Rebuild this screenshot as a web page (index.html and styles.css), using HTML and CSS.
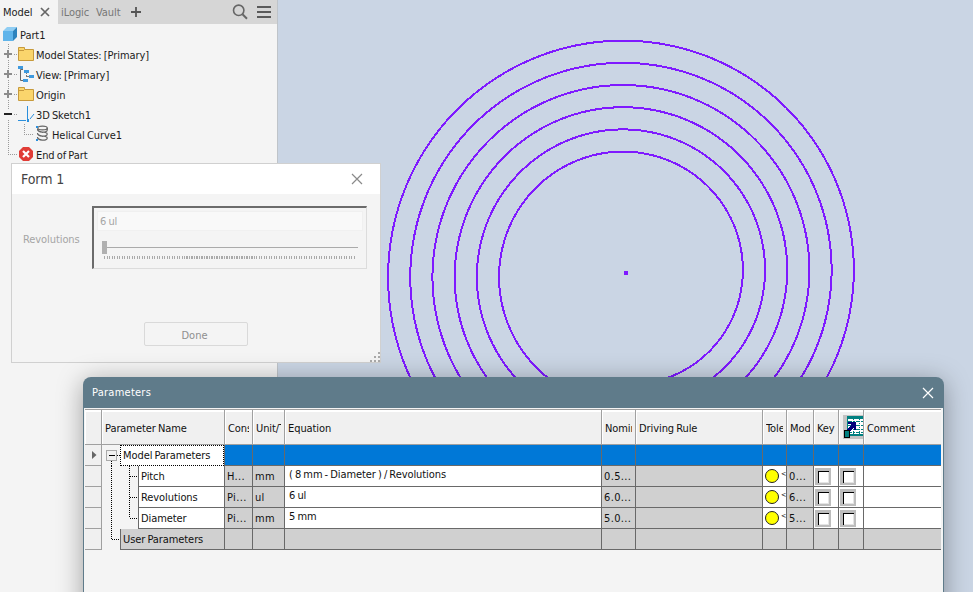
FILE: index.html
```
<!DOCTYPE html>
<html lang="en">
<head>
    <meta charset="UTF-8">
    <meta name="viewport" content="width=device-width, initial-scale=1.0">
    <title>Part1</title>
    <link rel="stylesheet" href="styles.css">
</head>
<body>

    <div class="workspace">
        <aside class="browser">
            <div class="tabs">
                <div class="tab active">
                    <span>Model</span>
                    <svg width="10" height="10" viewBox="0 0 10 10"><path d="M1 1L9 9M9 1L1 9" stroke="#666" stroke-width="1.7"/></svg>
                </div>
                <span class="tab ilogic">iLogic</span>
                <span class="tab vault">Vault</span>
                <svg class="tab-add" width="10" height="10" viewBox="0 0 10 10"><path d="M5 0V10M0 5H10" stroke="#555" stroke-width="1.8"/></svg>
                <svg class="search" width="16" height="16" viewBox="0 0 16 16"><circle cx="6.7" cy="6.3" r="5.2" fill="none" stroke="#666" stroke-width="1.6"/><path d="M10.5 10.2L15 14.8" stroke="#666" stroke-width="2"/></svg>
                <svg class="menu" width="14" height="12" viewBox="0 0 14 12"><path d="M0 1H14M0 6H14M0 11H14" stroke="#5a5a5a" stroke-width="2"/></svg>
            </div>

            <div class="tree">
                <svg class="tree-art" width="60" height="140" viewBox="0 0 60 140">
                    <g stroke="#9a9a9a" stroke-dasharray="1 1" fill="none" shape-rendering="crispEdges">
                        <path d="M8.500 19V129.500H17"/>
                        <path d="M14 29.500H17M14 49.500H17M14 69.500H17M14 89.500H17"/>
                        <path d="M24.500 99V109.500H33"/>
                    </g>
                    <g fill="#f4f4f4">
                        <rect x="4" y="24" width="9" height="11"/><rect x="4" y="44" width="9" height="11"/><rect x="4" y="64" width="9" height="11"/><rect x="4" y="84" width="9" height="11"/>
                    </g>
                    <path d="M4 29H12M8 25V33M4 49H12M8 45V53M4 69H12M8 65V73" stroke="#8c8c8c" stroke-width="2"/>
                    <path d="M4 89H12" stroke="#222" stroke-width="2"/>
                    <!-- part cube -->
                    <path d="M3 6L7 2H17L13 6Z" fill="#8fcdf3"/>
                    <path d="M3 6H13V16H3Z" fill="#5fb4ea"/>
                    <path d="M13 6L17 2V12L13 16Z" fill="#2e83bd"/>
                    <!-- folders -->
                    <path d="M18.500 35.500V22.500H24.500V24.500H33.500V35.500Z" fill="#fad56c" stroke="#c79a3c"/>
                    <path d="M18.500 75.500V62.500H24.500V64.500H33.500V75.500Z" fill="#fad56c" stroke="#c79a3c"/>
                    <path d="M19 25.500H24M19 65.500H24" stroke="#c79a3c"/>
                    <!-- view -->
                    <path d="M23 44.500H20.500V55.500H23" stroke="#666" fill="none"/>
                    <path d="M26.500 47V53M29 51.500H26" stroke="#777" fill="none" stroke-dasharray="2 1"/>
                    <path d="M18 41h5v3h-5zM24 45h5v3h-5zM29 50h5v3h-5zM23 54h5v3h-5z" fill="#3f9ade"/>
                    <!-- 3D sketch -->
                    <path d="M27.500 81V94M18 95.500H26M30 94L34 89" stroke="#2b8fdc" fill="none"/>
                    <path d="M27 94h2v3h-2z" fill="#2b8fdc"/>
                    <!-- helix -->
                    <g fill="none" stroke="#666" stroke-width="1.2">
                        <ellipse cx="42.500" cy="103" rx="4.800" ry="1.900"/>
                        <path d="M37.500 104C37 107.500 47 108.500 47.300 105M37.500 108C37 111.500 47 112.500 47.300 109M37.500 112C37 115.500 47 116.500 47.300 113M47.300 103V105M47.300 109C47 107 44 107 42 107.300M47.300 113C47 111 44 111 42 111.300"/>
                    </g>
                    <path d="M36 101h2v2h-2zM36 114h2v2h-2z" fill="#2b8fdc"/>
                    <!-- end of part -->
                    <path d="M23 122H29L33 126V132L29 136H23L19 132V126Z" fill="#e03c36"/>
                    <path d="M23 126L29 132M29 126L23 132" stroke="#fff" stroke-width="2.2"/>
                </svg>
                <div class="node root">Part1</div>
                <div class="node">Model States: [Primary]</div>
                <div class="node">View: [Primary]</div>
                <div class="node">Origin</div>
                <div class="node">3D Sketch1</div>
                <div class="node child">Helical Curve1</div>
                <div class="node">End of Part</div>
            </div>
        </aside>

        <main class="viewport">
            <svg width="695" height="592" viewBox="278 0 695 592">
                <path id="spiral" fill="none" stroke="#7f1aff" stroke-width="2" shape-rendering="crispEdges"/>
                <rect x="624" y="271" width="4" height="4" fill="#7f1aff"/>
            </svg>
        </main>
    </div>

    <section class="form-window">
        <div class="form-title">
            <span>Form 1</span>
            <svg width="12" height="12" viewBox="0 0 12 12"><path d="M1 1L11 11M11 1L1 11" stroke="#8a8a8a" stroke-width="1.2"/></svg>
        </div>
        <div class="form-row">
            <label>Revolutions</label>
            <div class="slider-box">
                <div class="value">6 ul</div>
                <div class="slider"><div class="track"></div><div class="thumb"></div></div>
                <div class="ticks"></div>
            </div>
        </div>
        <button class="done">Done</button>
        <svg class="grip" width="10" height="10" viewBox="0 0 10 10"><path d="M8 0h2v2h-2zM4 4h2v2h-2zM8 4h2v2h-2zM0 8h2v2h-2zM4 8h2v2h-2zM8 8h2v2h-2z" fill="#aaa"/></svg>
    </section>

    <section class="params-window">
        <div class="params-title">
            <span>Parameters</span>
            <svg width="12" height="12" viewBox="0 0 12 12"><path d="M1 1L11 11M11 1L1 11" stroke="#fff" stroke-width="1.2"/></svg>
        </div>
        <div class="params-body">
            <div class="row head">
                <div></div><div>Parameter Name</div><div><span>Cons</span></div><div><span>Unit/T</span></div><div>Equation</div><div><span>Nomin</span></div><div>Driving Rule</div><div><span>Tole</span></div><div><span>Mod</span></div><div>Key</div>
                <div class="export">
                    <svg width="21" height="24" viewBox="0 0 21 24" shape-rendering="crispEdges">
                        <rect width="21" height="24" fill="#c3c3c3"/>
                        <rect x="4" y="1" width="17" height="20" fill="#008080"/>
                        <rect x="5" y="4" width="16" height="15" fill="#fff"/>
                        <path d="M5 6.500H21M5 10.500H21M5 14.500H21M5 17.500H21" stroke="#008080" stroke-dasharray="4 1 2 1"/>
                        <path d="M10.500 4V19M16.500 4V19" stroke="#008080" stroke-dasharray="1 1"/>
                        <path d="M5 7H13V15H11V12L7 16H4V14L8 10V9H5Z" fill="#00007b"/>
                        <rect x="1.500" y="15.500" width="5" height="7" fill="#008080" stroke="#000"/>
                    </svg>
                </div>
                <div>Comment</div>
            </div>
            <div class="row group selected">
                <div><svg width="5" height="8" viewBox="0 0 5 8"><path d="M0 0L4.500 4L0 8Z" fill="#666"/></svg></div>
                <div class="name"><svg class="gutter" width="18" height="21" viewBox="0 0 18 21" shape-rendering="crispEdges"><path d="M15 10.500H18M9.500 16V21" stroke="#000" stroke-dasharray="1 1"/><rect x="4.500" y="5.500" width="10" height="10" fill="#f0f0f0" stroke="#aaa"/><path d="M7 10.500H13" stroke="#000"/></svg><span>Model Parameters</span></div>
                <div></div><div></div><div></div><div></div><div></div><div></div><div></div><div></div><div></div><div></div>
            </div>
            <div class="row">
                <div></div>
                <div class="name"><svg class="gutter" width="36" height="21" viewBox="0 0 36 21" shape-rendering="crispEdges"><path d="M9.500 0V21M27.500 0V21M28 10.500H36" stroke="#000" stroke-dasharray="1 1"/></svg><span>Pitch</span></div>
                <div class="gray">H...</div><div class="gray">mm</div><div class="eq">( 8 mm - Diameter ) / Revolutions</div><div class="gray">0.5...</div><div class="gray"></div><div class="tol"><i></i><b>&lt;</b></div><div class="gray">0...</div><div class="check"><i></i></div><div class="check"><i></i></div><div></div>
            </div>
            <div class="row">
                <div></div>
                <div class="name"><svg class="gutter" width="36" height="21" viewBox="0 0 36 21" shape-rendering="crispEdges"><path d="M9.500 1V21M27.500 1V21M28 10.500H36" stroke="#000" stroke-dasharray="1 1"/></svg><span>Revolutions</span></div>
                <div class="gray">Pi...</div><div class="gray">ul</div><div class="eq">6 ul</div><div class="gray">6.0...</div><div class="gray"></div><div class="tol"><i></i><b>&lt;</b></div><div class="gray">6...</div><div class="check"><i></i></div><div class="check"><i></i></div><div></div>
            </div>
            <div class="row">
                <div></div>
                <div class="name"><svg class="gutter" width="36" height="21" viewBox="0 0 36 21" shape-rendering="crispEdges"><path d="M9.500 0V21M27.500 0V10M28 10.500H36" stroke="#000" stroke-dasharray="1 1"/></svg><span>Diameter</span></div>
                <div class="gray">Pi...</div><div class="gray">mm</div><div class="eq">5 mm</div><div class="gray">5.0...</div><div class="gray"></div><div class="tol"><i></i><b>&lt;</b></div><div class="gray">5...</div><div class="check"><i></i></div><div class="check"><i></i></div><div></div>
            </div>
            <div class="row group user">
                <div></div>
                <div class="name"><svg class="gutter" width="18" height="21" viewBox="0 0 18 21" shape-rendering="crispEdges"><path d="M9.500 1V11M10 10.500H18" stroke="#000" stroke-dasharray="1 1"/></svg><span>User Parameters</span></div>
                <div></div><div></div><div></div><div></div><div></div><div></div><div></div><div></div><div></div><div></div>
            </div>
        </div>
    </section>

    <script>
        // helical curve seen from above, radius grows by one pitch each turn
        const cx = 626.5, cy = 273.5, startRadius = 116.3, pitch = 22.2;
        let d = '';
        for (let a = -90; a <= 2070; a += 2) {
            const r = startRadius + pitch * a / 360;
            const t = a * Math.PI / 180;
            d += (d ? 'L' : 'M') + (cx + r * Math.cos(t)).toFixed(2) + ' ' + (cy - r * Math.sin(t)).toFixed(2);
        }
        document.getElementById('spiral').setAttribute('d', d);
    </script>

</body>
</html>
```
FILE: styles.css
```
* {
    box-sizing: border-box;
}

body {
    margin: 0;
    height: 592px;
    overflow: hidden;
    position: relative;
    font-family: "DejaVu Sans Condensed", "Noto Sans", sans-serif;
    font-size: 11px;
    letter-spacing: -0.08px;
    word-spacing: -0.9px;
    color: #1c1c1c;
}

svg {
    display: block;
    flex: none;
}

.workspace {
    display: flex;
    height: 592px;
}

.browser {
    width: 278px;
    background: #f4f4f4;
    border-right: 1px solid #bfc4c9;
}

.viewport {
    flex: 1;
    background: #cad5e4;
}

/* browser tabs */
.tabs {
    display: flex;
    align-items: center;
    height: 24px;
    background: #d6d6d6;
}

.tab {
    flex: none;
    color: #777;
}

.tab.active {
    display: flex;
    align-items: center;
    gap: 8px;
    width: 58px;
    height: 24px;
    padding-left: 3px;
    background: #f4f4f4;
    color: #222;
}

.ilogic {
    width: 34px;
    padding-left: 3px;
}

.vault {
    width: 39px;
    padding-left: 4px;
}

.search {
    margin-left: 91px;
}

.menu {
    margin-left: 9px;
}

/* model tree */
.tree {
    position: relative;
    padding-top: 1px;
}

.tree-art {
    position: absolute;
    left: 0;
    top: 1px;
}

.node {
    height: 20px;
    line-height: 22px;
    padding-left: 36px;
    white-space: nowrap;
}

.node.root {
    padding-left: 20px;
}

.node.child {
    padding-left: 52px;
}

/* iLogic form */
.form-window {
    position: absolute;
    left: 11px;
    top: 163px;
    width: 370px;
    height: 200px;
    background: #f4f4f4;
    border: 1px solid #d0d0d0;
    color: #a5a5a5;
}

.form-title {
    display: flex;
    align-items: center;
    justify-content: space-between;
    height: 30px;
    padding: 0 17px 0 9px;
    background: #fff;
    color: #444;
    font-size: 14px;
    word-spacing: 0;
}

.form-row {
    display: flex;
    align-items: center;
    margin-top: 12px;
}

.form-row label {
    width: 80px;
    padding-left: 11px;
    padding-top: 4px;
}

.slider-box {
    width: 275px;
    height: 63px;
    padding: 3px;
    border: 1px solid #dcdcdc;
    border-top: 2px solid #6b6b6b;
    border-left: 2px solid #6b6b6b;
}

.value {
    width: 266px;
    height: 20px;
    line-height: 20px;
    padding-left: 2px;
    background: #f9f9f9;
    border: 1px solid #f0f0f0;
}

.slider {
    position: relative;
    height: 13px;
    margin: 10px 5px 0;
}

.track {
    height: 7px;
    margin-left: 2px;
    border-bottom: 1px solid #aaa;
}

.thumb {
    position: absolute;
    left: 0;
    top: 0;
    width: 5px;
    height: 13px;
    background: #b0b0b0;
}

.ticks {
    width: 251px;
    height: 3px;
    margin: 2px 0 0 7px;
    background: repeating-linear-gradient(90deg, #aaa 0 1px, transparent 1px 2.5px);
}

.done {
    display: block;
    width: 104px;
    height: 24px;
    margin: 53px 0 0 132px;
    padding: 2px 3px 0 0;
    background: #f4f4f4;
    border: 1px solid #d9d9d9;
    border-radius: 2px;
    font: inherit;
    color: #8f8f8f;
}

.grip {
    position: absolute;
    right: 0;
    bottom: 0;
}

/* parameters dialog */
.params-window {
    position: absolute;
    left: 83px;
    top: 377px;
    width: 861px;
    height: 240px;
    background: #5f7b8a;
    border-radius: 8px 8px 0 0;
    box-shadow: 0 4px 26px rgba(0, 0, 0, 0.35);
    color: #111;
}

.params-title {
    display: flex;
    align-items: center;
    justify-content: space-between;
    height: 31px;
    padding: 0 10px 0 9px;
    color: #fff;
    letter-spacing: 0.25px;
}

.params-body {
    height: 209px;
    margin: 0 1px;
    padding: 1px 1px 0;
    background: #f4f4f4;
}

.row {
    display: grid;
    grid-template-columns: 17px 123px 28px 32px 317px 34px 127px 24px 27px 25px 25px 77px;
    height: 21px;
}

.row > div {
    overflow: hidden;
    white-space: nowrap;
    background: #fff;
    border-right: 1px solid #696969;
    border-bottom: 1px solid #696969;
    padding-left: 3px;
    line-height: 21px;
}

.row > div:last-child {
    border-right: none;
}

.row > div:first-child {
    display: flex;
    align-items: center;
    padding-left: 7px;
    background: #f0f0f0;
    border-color: #a0a0a0;
}

.head {
    height: 36px;
}

.row.head > div {
    background: #f0f0f0;
    border-color: #a0a0a0;
    border-top: 1px solid #a0a0a0;
    box-shadow: inset 1px 2px #fff;
    line-height: 37px;
    padding-right: 3px;
}

.head span {
    display: block;
    overflow: hidden;
}

.row.head .export {
    padding: 5px 0 0 4px;
}

.row > .name {
    display: flex;
    padding: 0;
    background: #f4f4f4;
    border-bottom: none;
}

.name span {
    flex: 1;
    padding-left: 2px;
    background: #fff;
    border-left: 1px solid #696969;
    border-bottom: 1px solid #696969;
}

.row.selected > div:nth-child(n+3) {
    background: #0078d7;
}

.selected .name span {
    border: 1px dotted #000;
    line-height: 19px;
}

.row.user > div:nth-child(n+3),
.user .name span,
.row > .gray {
    background: #d0d0d0;
}

.row > .gray {
    padding-left: 2px;
    letter-spacing: 0.35px;
}

.row > .eq {
    line-height: 17px;
    padding-left: 4px;
}

.row > .tol {
    display: flex;
    align-items: center;
    padding-left: 2px;
}

.tol i {
    flex: none;
    width: 14px;
    height: 14px;
    border: 1px solid #222;
    border-radius: 50%;
    background: #ff0;
}

.tol b {
    padding: 0 0 3px 2px;
    font-size: 7px;
    font-weight: normal;
}

.row > .check {
    padding: 2px 0 0 1px;
}

.check i {
    display: block;
    width: 16px;
    height: 17px;
    border: 2px solid #bdbdbd;
    border-top-width: 3px;
    border-left-width: 3px;
    box-shadow: inset 1px 1px #000, inset -1px -1px #e4e4e4;
}
```
